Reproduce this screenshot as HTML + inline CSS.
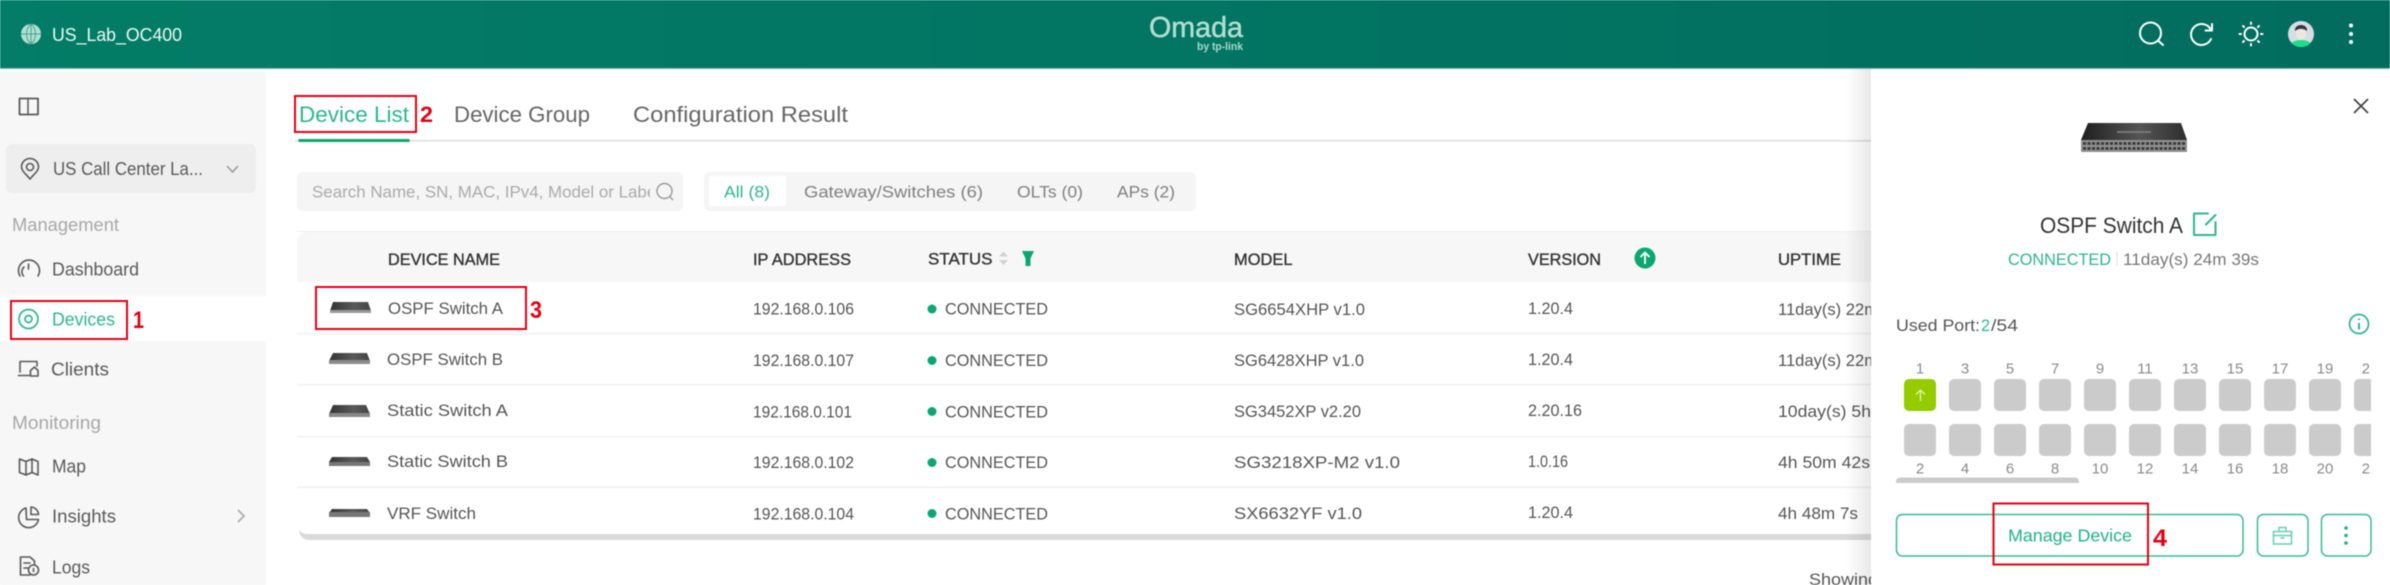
<!DOCTYPE html>
<html lang="en"><head><meta charset="utf-8"><title>Omada Devices</title>
<style>
html,body{margin:0;padding:0;background:#fff;width:2390px;height:585px;overflow:hidden}
svg{display:block;filter:blur(.45px)}
text{font-family:"Liberation Sans",sans-serif;font-size:17px;fill:#555}
.nav{font-size:18.5px;fill:#5a5a5a}
.sec{font-size:18.5px;fill:#a8a8a8}
.tab{font-size:22.5px;fill:#666}
.seg{font-size:17px;fill:#808080}
.th{font-size:16.5px;fill:#333;stroke:#333;stroke-width:.35}
.td{font-size:17px;fill:#555}
.red{font-size:24px;font-weight:bold;fill:#e60012}
.pl{font-size:15px;fill:#8a8a8a;text-anchor:middle}
.ic{fill:none;stroke:#5a5a5a;stroke-width:1.6;stroke-linecap:round;stroke-linejoin:round}
.wh{fill:none;stroke:#fff;stroke-width:2;stroke-linecap:round;stroke-linejoin:round}
.gr{fill:none;stroke:#2bb88e;stroke-width:2;stroke-linecap:round;stroke-linejoin:round}
.box{fill:none;stroke:#e60012;stroke-width:2}
.pt{fill:#cbcbcb}
</style></head><body>
<svg width="2390" height="585" viewBox="0 0 2390 585" xmlns="http://www.w3.org/2000/svg">
<defs>
<linearGradient id="hd" x1="0" x2="1" y1="0" y2="0"><stop offset="0" stop-color="#037d67"/><stop offset="1" stop-color="#026d5f"/></linearGradient>
<linearGradient id="sw" x1="0" x2="1" y1="0" y2="0"><stop offset="0" stop-color="#333"/><stop offset=".6" stop-color="#5a5a5a"/><stop offset="1" stop-color="#444"/></linearGradient>
<linearGradient id="bigsw" x1="0" x2="1" y1="0" y2="0"><stop offset="0" stop-color="#1e1e1e"/><stop offset=".55" stop-color="#555"/><stop offset="1" stop-color="#2e2e2e"/></linearGradient>
<linearGradient id="shd" x1="0" x2="1" y1="0" y2="0"><stop offset="0" stop-color="#000" stop-opacity="0"/><stop offset="1" stop-color="#000" stop-opacity=".09"/></linearGradient>
<clipPath id="ph"><rect x="300" y="172" width="350" height="39"/></clipPath>
<clipPath id="ports"><rect x="1896" y="360" width="475" height="125"/></clipPath>
<clipPath id="av"><circle cx="2301" cy="34" r="13"/></clipPath>
</defs>

<rect width="2390" height="585" fill="#fff"/>

<!-- Header -->
<rect width="2390" height="68" fill="url(#hd)"/>
<rect y="68" width="2390" height="1" fill="#7fb8ab"/>
<circle cx="31" cy="34" r="10" fill="#b3dfd2"/>
<path d="M21 34H41M31 24V44M31 24C25 29 25 39 31 44M31 24C37 29 37 39 31 44" fill="none" stroke="#45a48d" stroke-width="1"/>
<text x="52" y="41" style="font-size:18px;fill:#eef8f5" textLength="130" lengthAdjust="spacingAndGlyphs">US_Lab_OC400</text>
<text x="1149" y="37" style="font-size:29px;fill:#b2ded0;stroke:#b2ded0;stroke-width:.5" textLength="94" lengthAdjust="spacingAndGlyphs">Omada</text>
<text x="1197" y="50" style="font-size:11px;font-weight:bold;fill:#a9dacb" textLength="46" lengthAdjust="spacingAndGlyphs">by tp-link</text>
<circle cx="2150.5" cy="33" r="10.5" class="wh"/><path d="M2158.5 41L2163 45" class="wh"/>
<path d="M2210.5 29A10.5 10.5 0 1 0 2211 39" class="wh"/><path d="M2212 24V30.5H2205.5" class="wh"/>
<circle cx="2251" cy="34" r="6.5" class="wh"/>
<path d="M2251 22.5V24M2251 44V45.5M2239.5 34H2241M2261 34H2262.5M2243 26L2244 27M2258 41L2259 42M2243 42L2244 41M2258 27L2259 26" class="wh"/>
<circle cx="2301" cy="34" r="13" fill="#d5dfe3"/>
<g clip-path="url(#av)"><ellipse cx="2301" cy="49" rx="13" ry="9" fill="#1fdc8c"/><ellipse cx="2301" cy="33" rx="5" ry="7" fill="#eee7df"/><path d="M2295 31C2294 23 2308 23 2307 31C2303 28 2299 28 2295 31Z" fill="#30363e"/></g>
<circle cx="2351" cy="25.5" r="2" fill="#fff"/><circle cx="2351" cy="34" r="2" fill="#fff"/><circle cx="2351" cy="42" r="2" fill="#fff"/>

<!-- Sidebar -->
<rect x="0" y="71" width="266" height="514" fill="#f7f7f7"/>
<rect x="19.5" y="98.5" width="18.5" height="16" class="ic" style="stroke-width:1.8"/><path d="M28 98.5V114.5" class="ic" style="stroke-width:1.5"/>
<rect x="6" y="144" width="250" height="49" rx="6" fill="#eeeeee"/>
<path d="M30 179C26 174 21.5 171 21.5 167A8.5 8.5 0 0 1 38.5 167C38.5 171 34 174 30 179Z" class="ic"/><circle cx="30" cy="167" r="3.5" class="ic"/>
<text x="53" y="175" class="nav" textLength="150" lengthAdjust="spacingAndGlyphs">US Call Center La...</text>
<path d="M227 166L232.5 172L238 166" fill="none" stroke="#999" stroke-width="1.5"/>
<text x="12" y="231" class="sec" textLength="107" lengthAdjust="spacingAndGlyphs">Management</text>
<path d="M20 276A10.5 10.5 0 1 1 38 276M23.5 276A6.5 6.5 0 0 1 24 267M28.5 264V269" class="ic"/>
<text x="52" y="275.5" class="nav" textLength="87" lengthAdjust="spacingAndGlyphs">Dashboard</text>

<rect x="0" y="296" width="266" height="45" fill="#fff"/>
<circle cx="28.5" cy="319" r="9.5" fill="none" stroke="#2bb88e" stroke-width="1.7"/><circle cx="28.5" cy="319" r="3.5" fill="none" stroke="#2bb88e" stroke-width="1.7"/>
<text x="52" y="325.5" class="nav" style="fill:#2bb88e" textLength="63" lengthAdjust="spacingAndGlyphs">Devices</text>
<rect x="11" y="301" width="116" height="38" class="box"/>
<text x="133" y="328" class="red" textLength="11" lengthAdjust="spacingAndGlyphs">1</text>

<path d="M20 372V361.5H37V366M18.5 375.5H30M30.5 370.5L34.5 367L38 370.5V376H30.5Z" class="ic"/>
<text x="51" y="375.5" class="nav" textLength="58" lengthAdjust="spacingAndGlyphs">Clients</text>
<text x="12" y="429" class="sec" textLength="89" lengthAdjust="spacingAndGlyphs">Monitoring</text>
<path d="M19.5 459L26 461.5L32 459L38 461.500V475L32 472.5L26 475L19.5 472.5ZM26 461.5V475M32 459V472.5" class="ic"/>
<text x="52" y="472.5" class="nav" textLength="34" lengthAdjust="spacingAndGlyphs">Map</text>
<path d="M26 508A10 10 0 1 0 38.5 519.5H26.5Z" class="ic"/><path d="M31 507A8 8 0 0 1 38.5 514.5H31Z" class="ic"/>
<text x="52" y="522.5" class="nav" textLength="64" lengthAdjust="spacingAndGlyphs">Insights</text>
<path d="M238 510L244 516L238 522" fill="none" stroke="#aaa" stroke-width="1.7"/>
<path d="M30 575H20.5V557H30L34.5 561V564M24 563H30M24 568H28" class="ic"/><circle cx="33.5" cy="570" r="5" class="ic"/><path d="M33.5 568.5V571.5" class="ic"/>
<text x="52" y="573.5" class="nav" textLength="38" lengthAdjust="spacingAndGlyphs">Logs</text>

<!-- Tabs -->
<rect x="295" y="140" width="1576" height="1.5" fill="#dcdcdc"/>
<rect x="298.5" y="139" width="111" height="3" fill="#0aa870"/>
<text x="299" y="122" class="tab" style="fill:#2bb88e" textLength="110" lengthAdjust="spacingAndGlyphs">Device List</text>
<text x="454" y="122" class="tab" textLength="136" lengthAdjust="spacingAndGlyphs">Device Group</text>
<text x="633" y="122" class="tab" textLength="215" lengthAdjust="spacingAndGlyphs">Configuration Result</text>
<rect x="295" y="96" width="121" height="36" class="box"/>
<text x="420" y="122" class="red" style="font-size:22px" textLength="13" lengthAdjust="spacingAndGlyphs">2</text>

<!-- Search & segments -->
<rect x="297" y="172" width="386" height="39" rx="6" fill="#f5f5f5"/>
<text x="312" y="197.5" clip-path="url(#ph)" style="font-size:16.5px;fill:#aaa" textLength="348" lengthAdjust="spacingAndGlyphs">Search Name, SN, MAC, IPv4, Model or Label</text>
<circle cx="664.5" cy="191" r="7.5" fill="none" stroke="#999" stroke-width="1.4"/><path d="M670 197L673 200" stroke="#999" stroke-width="1.4"/>
<rect x="704" y="172" width="492" height="39" rx="6" fill="#f5f5f5"/>
<rect x="709" y="176" width="77" height="30" rx="2" fill="#fff"/>
<text x="724" y="197.5" class="seg" style="fill:#2bb88e" textLength="46" lengthAdjust="spacingAndGlyphs">All (8)</text>
<text x="804" y="197.5" class="seg" textLength="179" lengthAdjust="spacingAndGlyphs">Gateway/Switches (6)</text>
<text x="1017" y="197.5" class="seg" textLength="66" lengthAdjust="spacingAndGlyphs">OLTs (0)</text>
<text x="1117" y="197.5" class="seg" textLength="58" lengthAdjust="spacingAndGlyphs">APs (2)</text>

<!-- Table -->
<rect x="299" y="233" width="1600" height="307" rx="10" fill="#dadada"/>
<rect x="297" y="232" width="1600" height="302" rx="10" fill="#fff"/>
<path d="M297 282V242A10 10 0 0 1 307 232H1897V282Z" fill="#f7f7f7"/>
<rect x="297" y="333" width="1600" height="1.3" fill="#eee"/>
<rect x="297" y="384" width="1600" height="1.3" fill="#eee"/>
<rect x="297" y="436" width="1600" height="1.3" fill="#eee"/>
<rect x="297" y="486.5" width="1600" height="1.3" fill="#eee"/>
<path d="M297 231.5H1871" stroke="#efefef" stroke-width="1"/>

<text x="388" y="265" class="th" textLength="112" lengthAdjust="spacingAndGlyphs">DEVICE NAME</text>
<text x="753" y="265" class="th" textLength="98" lengthAdjust="spacingAndGlyphs">IP ADDRESS</text>
<text x="928" y="264.5" class="th" textLength="64.5" lengthAdjust="spacingAndGlyphs">STATUS</text>
<path d="M999 256.5L1003.5 251.5L1008 256.5Z M999 260L1003.5 265L1008 260Z" fill="#d2d2d2"/>
<path d="M1022 251H1034L1030.5 258.5V266H1025.5V258.5Z" fill="#0aa870"/>
<text x="1234" y="265" class="th" textLength="58.5" lengthAdjust="spacingAndGlyphs">MODEL</text>
<text x="1528" y="265" class="th" textLength="73" lengthAdjust="spacingAndGlyphs">VERSION</text>
<circle cx="1645" cy="258" r="10.5" fill="#0aa870"/><path d="M1645 264V252.5M1640.5 257L1645 252.5L1649.5 257" fill="none" stroke="#fff" stroke-width="1.8"/>
<text x="1778" y="265" class="th" textLength="63" lengthAdjust="spacingAndGlyphs">UPTIME</text>

<!-- Switch thumbs -->
<g>
<polygon points="333,302 368,302 371,311 330,311" fill="url(#sw)"/><rect x="330" y="310" width="41" height="3" fill="#999"/>
<polygon points="333,353 367,353 370,361 329,361" fill="url(#sw)"/><rect x="329" y="360" width="41" height="4" fill="#8c8c8c"/>
<polygon points="333,405 366,405 370,414 329,414" fill="url(#sw)"/><rect x="329" y="413" width="41" height="4" fill="#888"/>
<polygon points="332,457 367,457 370,462 329,462" fill="url(#sw)"/><rect x="329" y="462" width="41" height="4" fill="#777"/>
<polygon points="332,509 367,509 370,513 329,513" fill="url(#sw)"/><rect x="329" y="512" width="41" height="5" fill="#777"/>
</g>

<text x="388" y="314" class="td" textLength="115" lengthAdjust="spacingAndGlyphs">OSPF Switch A</text>
<text x="387" y="365" class="td" textLength="116" lengthAdjust="spacingAndGlyphs">OSPF Switch B</text>
<text x="387" y="416" class="td" textLength="121" lengthAdjust="spacingAndGlyphs">Static Switch A</text>
<text x="387" y="467" class="td" textLength="121" lengthAdjust="spacingAndGlyphs">Static Switch B</text>
<text x="387" y="519" class="td" textLength="89" lengthAdjust="spacingAndGlyphs">VRF Switch</text>

<text x="753" y="314.5" class="td" textLength="101" lengthAdjust="spacingAndGlyphs">192.168.0.106</text>
<text x="753" y="366" class="td" textLength="101" lengthAdjust="spacingAndGlyphs">192.168.0.107</text>
<text x="753" y="417.5" class="td" textLength="99" lengthAdjust="spacingAndGlyphs">192.168.0.101</text>
<text x="753" y="468" class="td" textLength="101" lengthAdjust="spacingAndGlyphs">192.168.0.102</text>
<text x="753" y="519.5" class="td" textLength="101" lengthAdjust="spacingAndGlyphs">192.168.0.104</text>

<g fill="#0aa870"><circle cx="932" cy="309" r="4.5"/><circle cx="932" cy="360.500" r="4.5"/><circle cx="932" cy="411.5" r="4.5"/><circle cx="932" cy="462.500" r="4.5"/><circle cx="932" cy="513.5" r="4.5"/></g>
<text x="945" y="314.5" class="td" textLength="103" lengthAdjust="spacingAndGlyphs">CONNECTED</text>
<text x="945" y="366" class="td" textLength="103" lengthAdjust="spacingAndGlyphs">CONNECTED</text>
<text x="945" y="417.5" class="td" textLength="103" lengthAdjust="spacingAndGlyphs">CONNECTED</text>
<text x="945" y="468" class="td" textLength="103" lengthAdjust="spacingAndGlyphs">CONNECTED</text>
<text x="945" y="519.5" class="td" textLength="103" lengthAdjust="spacingAndGlyphs">CONNECTED</text>

<text x="1234" y="315" class="td" textLength="131" lengthAdjust="spacingAndGlyphs">SG6654XHP v1.0</text>
<text x="1234" y="366" class="td" textLength="130" lengthAdjust="spacingAndGlyphs">SG6428XHP v1.0</text>
<text x="1234" y="417" class="td" textLength="127" lengthAdjust="spacingAndGlyphs">SG3452XP v2.20</text>
<text x="1234" y="468" class="td" textLength="166" lengthAdjust="spacingAndGlyphs">SG3218XP-M2 v1.0</text>
<text x="1234" y="519" class="td" textLength="128" lengthAdjust="spacingAndGlyphs">SX6632YF v1.0</text>

<text x="1528" y="314" class="td" textLength="45" lengthAdjust="spacingAndGlyphs">1.20.4</text>
<text x="1528" y="365" class="td" textLength="45" lengthAdjust="spacingAndGlyphs">1.20.4</text>
<text x="1528" y="416" class="td" textLength="54" lengthAdjust="spacingAndGlyphs">2.20.16</text>
<text x="1528" y="467" class="td" textLength="40" lengthAdjust="spacingAndGlyphs">1.0.16</text>
<text x="1528" y="518" class="td" textLength="45" lengthAdjust="spacingAndGlyphs">1.20.4</text>

<text x="1778" y="315" class="td" textLength="100" lengthAdjust="spacingAndGlyphs">11day(s) 22m</text>
<text x="1778" y="366" class="td" textLength="100" lengthAdjust="spacingAndGlyphs">11day(s) 22m</text>
<text x="1778" y="417" class="td" textLength="93" lengthAdjust="spacingAndGlyphs">10day(s) 5h</text>
<text x="1778" y="468" class="td" textLength="92" lengthAdjust="spacingAndGlyphs">4h 50m 42s</text>
<text x="1778" y="519" class="td" textLength="80" lengthAdjust="spacingAndGlyphs">4h 48m 7s</text>

<text x="1809" y="585" class="td" textLength="100" lengthAdjust="spacingAndGlyphs">Showing 1-8</text>

<rect x="316" y="287" width="210" height="42" class="box"/>
<text x="530" y="318" class="red" textLength="12" lengthAdjust="spacingAndGlyphs">3</text>

<!-- Detail panel -->
<rect x="1846" y="69" width="25" height="516" fill="url(#shd)"/>
<rect x="1871" y="69" width="519" height="516" fill="#fff"/>
<path d="M2354 99L2368 113M2368 99L2354 113" fill="none" stroke="#444" stroke-width="1.7"/>

<polygon points="2088,123 2181,123 2187,140 2081,140" fill="url(#bigsw)"/>
<rect x="2081" y="140" width="106" height="12" fill="#8f8f8f"/>
<path d="M2083 143.5H2185M2083 148.5H2185" stroke="#333" stroke-width="2.5" stroke-dasharray="3 1.5"/>
<rect x="2117" y="131" width="34" height="2" fill="#777"/>

<text x="2040" y="233" style="font-size:22px;fill:#333" textLength="143" lengthAdjust="spacingAndGlyphs">OSPF Switch A</text>
<path d="M2208 213.5H2194V235H2215.5V222M2215.5 215L2206 224.5" class="gr"/>
<text x="2008" y="265" style="font-size:17px;fill:#2bb88e" textLength="103" lengthAdjust="spacingAndGlyphs">CONNECTED</text>
<rect x="2116.5" y="252" width="1" height="14" fill="#ddd"/>
<text x="2123" y="265" style="font-size:17px;fill:#777" textLength="136" lengthAdjust="spacingAndGlyphs">11day(s) 24m 39s</text>

<text x="1896" y="331" style="font-size:17px;fill:#555" textLength="84" lengthAdjust="spacingAndGlyphs">Used Port:</text>
<text x="1981" y="331" style="font-size:17px;fill:#2bb88e" textLength="9" lengthAdjust="spacingAndGlyphs">2</text>
<text x="1991" y="331" style="font-size:17px;fill:#555" textLength="27" lengthAdjust="spacingAndGlyphs">/54</text>
<circle cx="2359" cy="324" r="9.5" fill="none" stroke="#2bb88e" stroke-width="1.7"/><path d="M2359 323V329.5M2359 318.5V320" fill="none" stroke="#2bb88e" stroke-width="2"/>

<g clip-path="url(#ports)">
<text x="1920" y="373.5" class="pl">1</text><text x="1965" y="373.5" class="pl">3</text><text x="2010" y="373.5" class="pl">5</text><text x="2055" y="373.5" class="pl">7</text><text x="2100" y="373.5" class="pl">9</text><text x="2145" y="373.5" class="pl">11</text><text x="2190" y="373.5" class="pl">13</text><text x="2235" y="373.5" class="pl">15</text><text x="2280" y="373.5" class="pl">17</text><text x="2325" y="373.5" class="pl">19</text><text x="2370" y="373.5" class="pl">21</text>
<rect x="1904" y="379" width="32" height="32" rx="5" fill="#94cc00"/>
<g class="pt">
<rect x="1949" y="379" width="32" height="32" rx="5"/><rect x="1994" y="379" width="32" height="32" rx="5"/><rect x="2039" y="379" width="32" height="32" rx="5"/><rect x="2084" y="379" width="32" height="32" rx="5"/><rect x="2129" y="379" width="32" height="32" rx="5"/><rect x="2174" y="379" width="32" height="32" rx="5"/><rect x="2219" y="379" width="32" height="32" rx="5"/><rect x="2264" y="379" width="32" height="32" rx="5"/><rect x="2309" y="379" width="32" height="32" rx="5"/><rect x="2354" y="379" width="32" height="32" rx="5"/>
<rect x="1904" y="424" width="32" height="32" rx="5"/><rect x="1949" y="424" width="32" height="32" rx="5"/><rect x="1994" y="424" width="32" height="32" rx="5"/><rect x="2039" y="424" width="32" height="32" rx="5"/><rect x="2084" y="424" width="32" height="32" rx="5"/><rect x="2129" y="424" width="32" height="32" rx="5"/><rect x="2174" y="424" width="32" height="32" rx="5"/><rect x="2219" y="424" width="32" height="32" rx="5"/><rect x="2264" y="424" width="32" height="32" rx="5"/><rect x="2309" y="424" width="32" height="32" rx="5"/><rect x="2354" y="424" width="32" height="32" rx="5"/>
</g>
<path d="M1920.5 401V390M1916 394.5L1920.5 390L1925 394.5" fill="none" stroke="#e4f3b0" stroke-width="1.3"/>
<text x="1920" y="473.5" class="pl">2</text><text x="1965" y="473.5" class="pl">4</text><text x="2010" y="473.5" class="pl">6</text><text x="2055" y="473.5" class="pl">8</text><text x="2100" y="473.5" class="pl">10</text><text x="2145" y="473.5" class="pl">12</text><text x="2190" y="473.5" class="pl">14</text><text x="2235" y="473.5" class="pl">16</text><text x="2280" y="473.5" class="pl">18</text><text x="2325" y="473.5" class="pl">20</text><text x="2370" y="473.5" class="pl">22</text>
</g>
<path d="M1896 483V481A4 4 0 0 1 1900 477.5H2075A4 4 0 0 1 2079 481V483Z" fill="#cbcbcb"/>

<rect x="1896.5" y="514.5" width="346.5" height="41.5" rx="6" fill="#fff" stroke="#37bb93" stroke-width="1.5"/>
<text x="2008" y="541.5" style="font-size:17.5px;fill:#1eb386" textLength="124" lengthAdjust="spacingAndGlyphs">Manage Device</text>
<rect x="2257.5" y="514.5" width="50.5" height="41.5" rx="6" fill="#fff" stroke="#37bb93" stroke-width="1.5"/>
<path d="M2273.5 531.5H2291.5V544H2273.5ZM2279 531.5V527.5H2286V531.5M2273.5 535.5H2291.5M2280.5 538H2284.5" fill="none" stroke="#65d1ad" stroke-width="1.5"/>
<rect x="2321.5" y="514.5" width="49.5" height="41.5" rx="6" fill="#fff" stroke="#37bb93" stroke-width="1.5"/>
<circle cx="2346" cy="528" r="1.8" fill="#1eb386"/><circle cx="2346" cy="535.5" r="1.8" fill="#1eb386"/><circle cx="2346" cy="543" r="1.8" fill="#1eb386"/>
<rect x="1993.5" y="503.5" width="154.5" height="61" class="box"/>
<text x="2153" y="546" class="red" textLength="14" lengthAdjust="spacingAndGlyphs">4</text>
</svg>
</body></html>
